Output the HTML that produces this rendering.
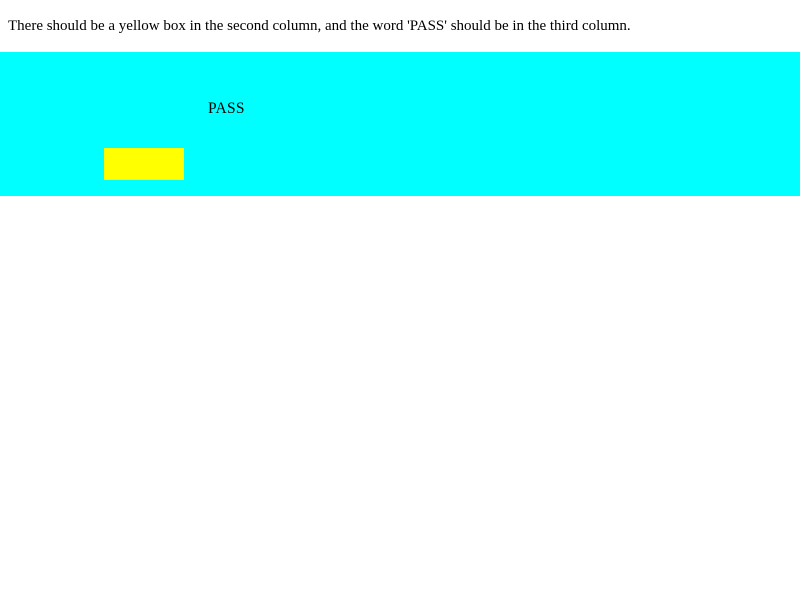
<!DOCTYPE html>
<html><head><style>
html,body{margin:0;padding:0;background:#fff;}
body{font-family:"Liberation Serif",serif;font-size:16px;}
p{position:absolute;left:8px;top:17px;margin:0;line-height:19px;font-size:15px;}
.band{position:absolute;left:0;top:52px;width:800px;height:144px;background:#0ff;}
.y{position:absolute;left:104px;top:96px;width:80px;height:32px;background:#ff0;}
.pass{position:absolute;left:208px;top:47px;line-height:19px;font-size:15.5px;letter-spacing:0.3px;}
</style></head><body>
<p>There should be a yellow box in the second column, and the word 'PASS' should be in the third column.</p>
<div class="band"><div class="y"></div><div class="pass">PASS</div></div>
</body></html>
